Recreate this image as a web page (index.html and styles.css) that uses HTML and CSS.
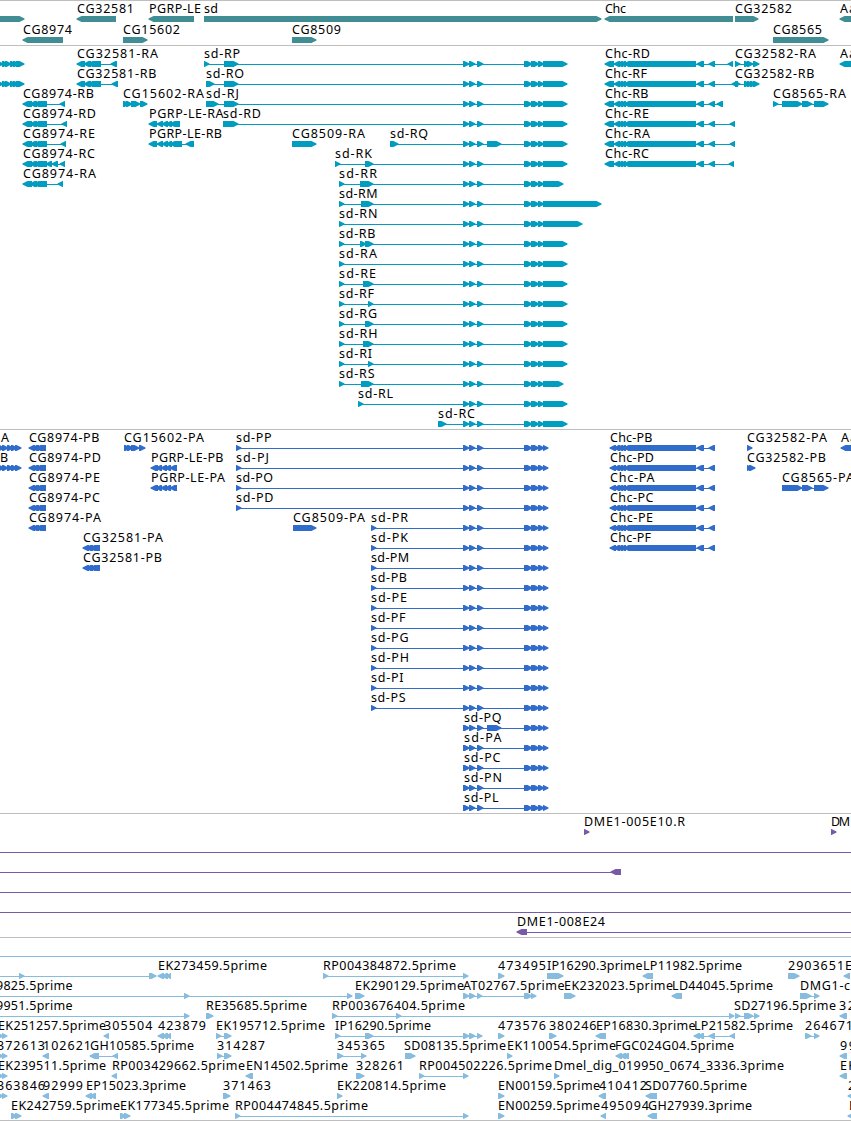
FILE: index.html
```
<!DOCTYPE html>
<html>
   <head>
      <meta charset="utf-8" />
      <title>sd region</title>
      <link rel="stylesheet" href="styles.css">
   </head>
   <body>
      <main>
         <section class="track gene"><svg id="gene" width="851" height="44"></svg></section>
         <section class="track transcript"><svg id="transcript" width="851" height="383"></svg></section>
         <section class="track protein"><svg id="protein" width="851" height="383"></svg></section>
         <section class="track bac"><svg id="bac" width="851" height="123"></svg></section>
         <section class="track est"><svg id="est" width="851" height="182"></svg></section>
      </main>
      <script src="script.js"></script>
   </body>
</html>
```
FILE: styles.css
```
body {margin: 0; background: #fff;}
main {width: 851px; border-bottom: 1px solid #bebebe; overflow: hidden;}
.track {border-top: 1px solid #bebebe;}
.track svg {display: block; overflow: hidden;}
.track text {font-family: "Noto Sans", "DejaVu Sans", sans-serif; font-size: 12.5px; fill: #000;}
.gene path {fill: #408e93;}
.transcript path {fill: #009dc0;}
.protein path {fill: #306ccc;}
.bac path {fill: #775aa8;}
.est path {fill: #87bcdf;}
```
FILE: script.js
```
var NS = "http://www.w3.org/2000/svg";

// exons shared by the sd isoforms
var sd = " 463,469 469,475 477,483 524,530 526,532 531,537 533,539 538,544 543,";
var sdP = sd + "548";
var chc = "605,614 614,620 617,623 620,626 624,696 697,704 709,715 ";
var chcP = "610,616 614,620 617,623 620,626 624,696 697,704 709,715";
var cg8974 = "23,32 30,37 34,47 ";
var cg8974P = "29,35 32,39 36,46";
var cg32581 = "77,85 84,91 88,101 ";
var cg32581P = "83,89 86,93 90,100";
var pgrpP = "151,158 156,162 161,167 165,171 170,177";

// row, strand, label x, label, label width, exons
var tracks = {
   gene: [
      [0, "+", 0, "", 0, "-9,24"],
      [0, "-", 77, "CG32581", 57, "77,116"],
      [0, "-", 149, "PGRP-LE", 52, "149,194"],
      [0, "+", 204, "sd", 14, "204,601"],
      [0, "-", 605, "Chc", 21, "605,733"],
      [0, "+", 735, "CG32582", 57, "735,758"],
      [0, "-", 840, "Aa", 16, "840,870"],
      [1, "-", 23, "CG8974", 49, "23,63"],
      [1, "+", 123, "CG15602", 57, "123,147"],
      [1, "+", 292, "CG8509", 49, "292,316"],
      [1, "+", 773, "CG8565", 49, "773,828"]
   ],
   transcript: [
      [0, "+", 0, "", 0, "-3,3 2,8 5,11 10,16 13,19 16,24"],
      [0, "-", 77, "CG32581-RA", 81, cg32581 + "111,117"],
      [0, "+", 204, "sd-RP", 36, "204,209 224,238" + sd + "567"],
      [0, "-", 605, "Chc-RD", 45, chc + "728,733"],
      [0, "+", 735, "CG32582-RA", 81, "735,740 744,750 747,753 753,759"],
      [0, "-", 840, "Aa", 16, "840,870"],
      [1, "+", 0, "", 0, "-3,3 2,8 5,11 10,16 13,19 16,24"],
      [1, "-", 77, "CG32581-RB", 79.5, cg32581 + "112,118"],
      [1, "+", 206, "sd-RO", 38, "206,214 224,238" + sd + "567"],
      [1, "-", 605, "Chc-RF", 42, chc + "732,738"],
      [1, "+", 735, "CG32582-RB", 79.5, "735,740 744,750 747,753 750,756 753,759"],
      [2, "-", 23, "CG8974-RB", 71, cg8974 + "60,65"],
      [2, "+", 123, "CG15602-RA", 81, "123,129 126,132 131,140 140,147"],
      [2, "+", 206, "sd-RJ", 33, "206,218 224,238" + sd + "567"],
      [2, "-", 605, "Chc-RB", 43.5, chc + "717,723"],
      [2, "+", 773, "CG8565-RA", 73, "773,778 782,802 802,812 814,828"],
      [3, "-", 23, "CG8974-RD", 73, cg8974 + "62,67"],
      [3, "-", 149, "PGRP-LE-RA", 74.5, "149,157 157,163 162,168 166,172 170,180"],
      [3, "+", 223, "sd-RD", 38, "223,238" + sd + "567"],
      [3, "-", 605, "Chc-RE", 44, chc + "730,735"],
      [4, "-", 23, "CG8974-RE", 72, cg8974 + "61,66"],
      [4, "-", 149, "PGRP-LE-RB", 73, "149,157 157,163 162,168 166,172 170,182 186,194"],
      [4, "+", 292, "CG8509-RA", 73, "292,316"],
      [4, "+", 390, "sd-RQ", 38, "390,398 487,501" + sd + "567"],
      [4, "-", 605, "Chc-RA", 45, chc + "730,735"],
      [5, "-", 23, "CG8974-RC", 72, cg8974 + "46,52 52,58 60,65"],
      [5, "+", 335, "sd-RK", 37, "335,340 365,373" + sd + "567"],
      [5, "-", 605, "Chc-RC", 44, chc + "729,734"],
      [6, "-", 23, "CG8974-RA", 73, cg8974 + "58,63"],
      [6, "+", 339, "sd-RR", 38, "339,344 360,366 362,373" + sd + "563"],
      [7, "+", 339, "sd-RM", 38.5, "339,344 361,373" + sd + "601"],
      [8, "+", 339, "sd-RN", 38.5, "339,344" + sd + "582"],
      [9, "+", 339, "sd-RB", 36.5, "339,344 360,366 365,373" + sd + "567"],
      [10, "+", 339, "sd-RA", 38, "339,344" + sd + "567"],
      [11, "+", 339, "sd-RE", 37, "339,344 363,373" + sd + "567"],
      [12, "+", 339, "sd-RF", 35, "339,344 368,373" + sd + "567"],
      [13, "+", 339, "sd-RG", 38, "339,344 365,373" + sd + "567"],
      [14, "+", 339, "sd-RH", 38.5, "339,344 363,373" + sd + "567"],
      [15, "+", 339, "sd-RI", 33, "339,344 368,373" + sd + "567"],
      [16, "+", 339, "sd-RS", 35.5, "339,344 361,373" + sd + "563"],
      [17, "+", 358, "sd-RL", 35, "358,363" + sd + "567"],
      [18, "+", 438, "sd-RC", 37, "438,446" + sd + "567"]
   ],
   protein: [
      [0, "+", 1, "A", 9, "-2,4 2,8 7,13 11,17 15,21"],
      [0, "-", 29, "CG8974-PB", 70.5, cg8974P],
      [0, "+", 124, "CG15602-PA", 80, "124,130 127,133 131,139 139,145"],
      [0, "+", 236, "sd-PP", 35.5, "236,241" + sdP],
      [0, "-", 610, "Chc-PB", 42.5, chcP],
      [0, "+", 747, "CG32582-PA", 80, "747,752"],
      [0, "-", 841, "Aa", 16, "841,870"],
      [1, "+", 0, "B", 9, "-2,4 2,8 7,13 11,17 15,21"],
      [1, "-", 29, "CG8974-PD", 72, cg8974P],
      [1, "-", 151, "PGRP-LE-PB", 72.5, pgrpP],
      [1, "+", 236, "sd-PJ", 33, "236,241" + sdP],
      [1, "-", 610, "Chc-PD", 44, chcP],
      [1, "+", 747, "CG32582-PB", 79, "747,752 749,755"],
      [2, "-", 29, "CG8974-PE", 71, cg8974P],
      [2, "-", 151, "PGRP-LE-PA", 74, pgrpP],
      [2, "+", 236, "sd-PO", 37, "236,241" + sdP],
      [2, "-", 610, "Chc-PA", 44.5, chcP],
      [2, "+", 782, "CG8565-PA", 72, "782,802 802,812 814,828"],
      [3, "-", 29, "CG8974-PC", 71, cg8974P],
      [3, "+", 236, "sd-PD", 37.5, "236,241" + sdP],
      [3, "-", 610, "Chc-PC", 43.5, chcP],
      [4, "-", 29, "CG8974-PA", 72, cg8974P],
      [4, "+", 293, "CG8509-PA", 72, "293,316"],
      [4, "+", 371, "sd-PR", 37, "371,376" + sdP],
      [4, "-", 610, "Chc-PE", 43, chcP],
      [5, "-", 83, "CG32581-PA", 80, cg32581P],
      [5, "+", 371, "sd-PK", 37, "371,376" + sdP],
      [5, "-", 610, "Chc-PF", 41, chcP],
      [6, "-", 83, "CG32581-PB", 79, cg32581P],
      [6, "+", 371, "sd-PM", 38, "371,376" + sdP],
      [7, "+", 371, "sd-PB", 36, "371,376" + sdP],
      [8, "+", 371, "sd-PE", 36, "371,376" + sdP],
      [9, "+", 371, "sd-PF", 34.5, "371,376" + sdP],
      [10, "+", 371, "sd-PG", 37.5, "371,376" + sdP],
      [11, "+", 371, "sd-PH", 38, "371,376" + sdP],
      [12, "+", 371, "sd-PI", 32.5, "371,376" + sdP],
      [13, "+", 371, "sd-PS", 34.5, "371,376" + sdP],
      [14, "+", 464, "sd-PQ", 37.5, "464,469 487,501" + sdP],
      [15, "+", 464, "sd-PA", 37.5, "464,469" + sdP],
      [16, "+", 464, "sd-PC", 36.5, "464,469" + sdP],
      [17, "+", 464, "sd-PN", 38, "464,469" + sdP],
      [18, "+", 464, "sd-PL", 34.5, "464,469" + sdP]
   ],
   bac: [
      [0, "+", 584, "DME1-005E10.R", 101, "584,589"],
      [0, "+", 831, "DM", 19, "831,836"],
      [1, "+", 0, "", 0, "-9,-4 860,865"],
      [2, "-", 0, "", 0, "-9,-4 611,621"],
      [3, "+", 0, "", 0, "-9,-4 860,865"],
      [4, "+", 0, "", 0, "-9,-4 860,865"],
      [5, "-", 517, "DME1-008E24", 88, "517,527 860,865"]
   ],
   est: [
      [0, "+", 0, "", 0, "-9,-4 860,865"],
      [1, "+", 0, "", 0, "-9,-4 19,24 149,156"],
      [1, "-", 158, "EK273459.5prime", 109, "158,164 162,168 166,171"],
      [1, "+", 323, "RP004384872.5prime", 133, "323,328 463,468"],
      [1, "+", 498, "473495", 48, "498,504"],
      [1, "+", 547, "IP16290.3prime", 95.5, "547,563"],
      [1, "-", 643, "LP11982.5prime", 99, "643,653"],
      [1, "+", 788, "2903651E", 64, "788,799"],
      [1, "-", 0, "", 0, "844,850"],
      [2, "+", -4, "9825.5prime", 76.5, "-9,-4 184,189 347,352"],
      [2, "+", 355, "EK290129.5prime", 109, "355,364"],
      [2, "+", 463, "AT02767.5prime", 101.5, "463,469 469,475 477,482 524,530 526,532 531,536"],
      [2, "+", 564, "EK232023.5prime", 109, "564,575"],
      [2, "-", 672, "LD44045.5prime", 101, "672,682"],
      [2, "+", 800, "DMG1-cl", 54, "800,811 814,819"],
      [3, "+", -4, "9951.5prime", 76.5, "-9,-4 184,189"],
      [3, "+", 206, "RE35685.5prime", 101, "206,213"],
      [3, "+", 332, "RP003676404.5prime", 133, "332,337 396,401 729,734"],
      [3, "+", 734, "SD27196.5prime", 102, "735,740 744,751 747,753 754,759"],
      [3, "-", 839, "32", 16, "840,847"],
      [4, "+", -2, "EK251257.5prime", 108, "-3,3 2,7"],
      [4, "-", 104, "305504", 48.5, "104,109"],
      [4, "-", 158, "423879", 48, "158,164 162,168 166,171"],
      [4, "+", 216, "EK195712.5prime", 109, "216,221 224,231"],
      [4, "+", 335, "IP16290.5prime", 96, "335,340 365,373 463,469 469,475 477,482"],
      [4, "+", 498, "473576", 48, "498,504"],
      [4, "+", 549, "380246", 47.5, "549,556"],
      [4, "-", 596, "EP16830.3prime", 99.5, "596,606"],
      [4, "-", 694, "LP21582.5prime", 99, "694,700 698,704 709,715 730,735"],
      [4, "+", 805, "264671", 48, "805,811 814,819"],
      [5, "+", -3, "372613", 48, "-3,3 2,7"],
      [5, "-", 43, "102621", 48, "43,49"],
      [5, "-", 90, "GH10585.5prime", 104, "90,99 113,118"],
      [5, "+", 217, "314287", 48, "217,222 224,231"],
      [5, "+", 337, "345365", 48, "337,343 361,366"],
      [5, "+", 404, "SD08135.5prime", 102, "405,415"],
      [5, "+", 507, "EK110054.5prime", 109, "507,512"],
      [5, "-", 615, "FGC024G04.5prime", 119, "616,622 620,626 623,629"],
      [5, "-", 840, "99", 16, "840,847"],
      [6, "+", -2, "EK239511.5prime", 108, "-3,3 2,7"],
      [6, "-", 112, "RP003429662.5prime", 133, "112,117"],
      [6, "-", 246, "EN14502.5prime", 102, "246,253"],
      [6, "+", 356, "328261", 48, "356,364"],
      [6, "+", 419, "RP004502226.5prime", 133, "419,424 463,468"],
      [6, "+", 554, "Dmel_dig_019950_0674_3336.3prime", 230, "554,559"],
      [6, "-", 840, "EK", 16, "840,847"],
      [7, "+", -3, "363846", 48, "-3,3 2,7"],
      [7, "-", 43, "92999", 40, "43,49"],
      [7, "-", 86, "EP15023.3prime", 100, "86,92 90,96"],
      [7, "+", 223, "371463", 48, "223,230"],
      [7, "+", 337, "EK220814.5prime", 109, "337,342"],
      [7, "+", 498, "EN00159.5prime", 102, "498,504"],
      [7, "-", 599, "410412", 48, "599,606"],
      [7, "-", 645, "SD07760.5prime", 102, "646,657"],
      [7, "-", 848, "2", 8, "848,854"],
      [8, "+", 11, "EK242759.5prime", 109, "11,17 15,21"],
      [8, "+", 120, "EK177345.5prime", 109, "120,126 124,130"],
      [8, "+", 235, "RP004474845.5prime", 133, "235,240 463,468"],
      [8, "+", 498, "EN00259.5prime", 102, "498,504"],
      [8, "-", 601, "495094", 48, "601,606"],
      [8, "-", 648, "GH27939.3prime", 104, "648,657"],
      [8, "-", 849, "E", 8, "848,854"]
   ]
};

function exon (a, b, y, strand){
   // body with a pointed end on the strand's side
   if (strand == "+"){
      return "M" + a + " " + y + "H" + (b - 4.5) + "L" + (b + 0.5) + " " + (y + 2.5) + "v1L" + (b - 4.5) + " " + (y + 6) + "H" + a + "Z";
   }
   return "M" + b + " " + y + "V" + (y + 6) + "H" + (a + 4.5) + "L" + (a - 0.5) + " " + (y + 3.5) + "v-1L" + (a + 4.5) + " " + y + "Z";
}

function draw (id, pitch){
   var svg = document.getElementById(id);
   tracks[id].forEach(function (f){
      var y = 15 + f[0] * pitch;
      var min = 9999, max = -9999;
      f[5].split(" ").forEach(function (pair){
         var p = pair.split(",").map(Number);
         var path = document.createElementNS(NS, "path");
         path.setAttribute("d", exon(p[0], p[1], y, f[1]));
         svg.appendChild(path);
         min = Math.min(min, p[0]);
         max = Math.max(max, p[1]);
      });

      // intron line
      var line = document.createElementNS(NS, "path");
      line.setAttribute("d", "M" + min + " " + (y + 3) + "H" + max + "v1H" + min + "Z");
      svg.appendChild(line);

      if (f[3]){
         var text = document.createElementNS(NS, "text");
         text.setAttribute("x", f[2]);
         text.setAttribute("y", y - 3);
         text.setAttribute("textLength", f[4]);
         text.textContent = f[3];
         svg.appendChild(text);
      }
   });
}

draw("gene", 21);
draw("transcript", 20);
draw("protein", 20);
draw("bac", 20);
draw("est", 20);
```
